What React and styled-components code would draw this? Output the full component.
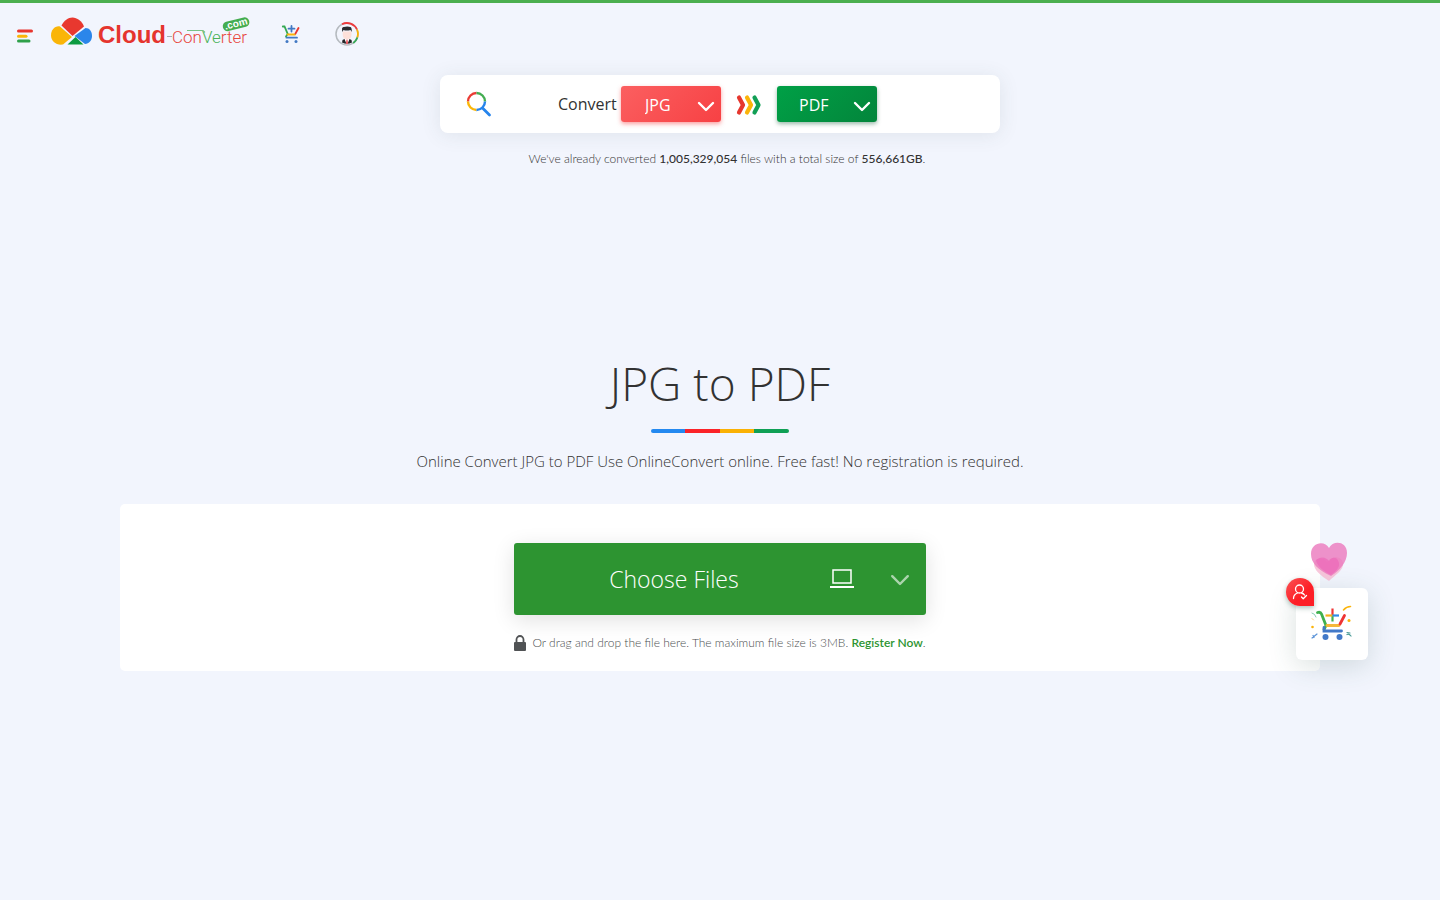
import styled, { createGlobalStyle } from "styled-components";

const GlobalStyle = createGlobalStyle`
  * {
    box-sizing: border-box;
  }

  body {
    margin: 0;
    min-height: 100vh;
    background: #f2f5fd;
    color: #323232;
    font-family: "Open Sans", "Noto Sans", sans-serif;
    font-weight: 300;
  }
`;

const Page = styled.div`
  border-top: 3px solid #4caf50;
`;

const Header = styled.header`
  display: flex;
  align-items: center;
  height: 62px;
  padding: 0 16px;
`;

const IconButton = styled.button`
  display: flex;
  padding: 4px 0 0;
  border: 0;
  background: none;
  cursor: pointer;
`;

const HeaderLink = styled.a`
  display: flex;
  margin-left: ${(props) => props.$gap};
`;

const SearchBar = styled.form`
  display: flex;
  align-items: center;
  width: 100%;
  max-width: 560px;
  height: 58px;
  margin: 10px auto 0;
  padding: 0 26px;
  border-radius: 8px;
  background: #fff;
  box-shadow: 0 2px 20px rgba(60, 80, 80, 0.1);
`;

const ConvertLabel = styled.label`
  width: 63px;
  margin-left: 66px;
  font-size: 16px;
  font-weight: 400;
`;

const SelectWrapper = styled.div`
  display: grid;
  align-items: center;
  width: 100px;
  height: 36px;
  border-radius: 3px;
  background: ${(props) => props.$background};
  box-shadow: 0 2px 4px ${(props) => props.$shadow};

  > * {
    grid-area: 1 / 1;
  }

  svg {
    justify-self: end;
    margin: 5px 6px 0 0;
    pointer-events: none;
  }
`;

const FormatSelect = styled.select`
  width: 100%;
  height: 36px;
  padding: 2px 0 0 ${(props) => props.$indent};
  border: 0;
  background: none;
  color: #fff;
  font-family: inherit;
  font-size: 16px;
  font-weight: 400;
  appearance: none;
`;

const ArrowsIcon = styled.svg`
  margin: 2px 16px 0 14px;
`;

const Stats = styled.p`
  margin: 16px 0 0;
  padding-left: 14px;
  font-family: Lato, sans-serif;
  font-size: 12px;
  line-height: 20px;
  text-align: center;

  b {
    font-weight: 500;
  }
`;

const Main = styled.main`
  max-width: 1200px;
  margin: 183px auto 0;
  text-align: center;
`;

const Title = styled.h1`
  margin: 0;
  font-size: 46px;
  font-weight: 300;
  line-height: 62px;
`;

const Divider = styled.div`
  width: 138px;
  height: 4px;
  margin: 15px auto 0;
  border-radius: 2px;
  background: linear-gradient(
    90deg,
    #2489f0 25%,
    #fb2329 25% 50%,
    #fab105 50% 75%,
    #0fa055 75%
  );
`;

const Description = styled.p`
  margin: 16px 0 0;
  font-size: 15px;
  line-height: 24px;
`;

const UploadCard = styled.section`
  display: flex;
  flex-direction: column;
  align-items: center;
  margin-top: 31px;
  padding: 39px 16px 18px;
  border-radius: 5px;
  background: #fff;
`;

const ChooseButton = styled.button`
  display: flex;
  align-items: center;
  width: 100%;
  max-width: 412px;
  height: 72px;
  padding: 0 16px 0 0;
  border: 0;
  border-radius: 3px;
  background: #2d9431;
  box-shadow: 0 5px 22px rgba(0, 0, 0, 0.12);
  color: #fff;
  font-family: inherit;
  font-size: 23px;
  font-weight: 300;
  cursor: pointer;
`;

const ChooseLabel = styled.span`
  flex: 1;
  padding-left: 4px;
`;

const ChevronSlot = styled.span`
  display: flex;
  margin: 4px 0 0 36px;
  opacity: 0.6;
`;

const DropHint = styled.p`
  display: flex;
  align-items: center;
  gap: 6px;
  margin: 18px 0 0;
  color: #4c4f51;
  font-family: Lato, sans-serif;
  font-size: 12px;
  line-height: 20px;

  a {
    color: #2d9431;
    font-weight: 600;
    text-decoration: none;
  }
`;

const FloatingCart = styled.aside`
  position: fixed;
  right: 72px;
  bottom: 240px;
  width: 72px;
  height: 72px;
  border-radius: 6px;
  background: #fff;
  box-shadow: 0 6px 28px rgba(50, 90, 80, 0.18);
`;

const CartLink = styled.a`
  display: flex;
  align-items: center;
  justify-content: center;
  height: 100%;
`;

const UserBadge = styled.button`
  position: absolute;
  top: -10px;
  left: -10px;
  display: flex;
  align-items: center;
  justify-content: center;
  width: 28px;
  height: 28px;
  padding: 0;
  border: 0;
  border-radius: 14px 14px 0 14px;
  background: linear-gradient(135deg, #f95356, #fd1f26 60%);
  box-shadow: 0 2px 5px rgba(20, 80, 60, 0.35);
`;

const Heart = styled.svg`
  position: absolute;
  top: -46px;
  left: 14px;
`;

const Chevron = ({ size = 18, strokeWidth = 2.4 }) => (
  <svg
    width={size}
    height={(size * 12) / 18}
    viewBox="0 0 18 12"
    fill="none"
    stroke="#fff"
    strokeWidth={strokeWidth}
    strokeLinecap="round"
    strokeLinejoin="round"
  >
    <path d="M2 2l7 7 7-7" />
  </svg>
);

const MenuIcon = () => (
  <svg width="18" height="16" viewBox="0 0 18 16" strokeWidth="3" strokeLinecap="round">
    <path d="M2.500 3h13" stroke="#e8352e" />
    <path d="M2.500 8.200h7.500" stroke="#fbb40a" />
    <path d="M2.500 13h10.500" stroke="#2fa04a" />
  </svg>
);

const Logo = () => (
  <svg width="200" height="40" viewBox="0 -2 200 40">
    <path d="M10.500 9.500C13 4.500 17 1.500 21.500 1.500S31 5 33 10.500L21.500 20z" fill="#e8382f" />
    <path d="M9 10.500L21 21 12 28.500C5 29.500 0 25 0 19.500S4 9.500 9 10.500z" fill="#fab508" />
    <path d="M34.500 12C38.500 12 41 15.500 41 20S38 27.500 34 28L23.500 20z" fill="#2b86ea" />
    <path d="M24.500 21L32.500 28.500H16.500z" fill="#0d9b41" />
    <text
      x="47"
      y="27"
      fill="#e5342e"
      fontFamily="Liberation Sans, sans-serif"
      fontSize="24"
      fontWeight="700"
    >
      Cloud
    </text>
    <path d="M116 20.500h5" stroke="#a5adb5" />
    <text x="121" y="27" fontFamily="Roboto, sans-serif" fontSize="17" fontWeight="300">
      <tspan fill="#e8483f">Con</tspan>
      <tspan fill="#4bb25a">Ve</tspan>
      <tspan fill="#e8483f">rter</tspan>
    </text>
    <path d="M136 14.500h16l2 2" fill="none" stroke="#79c285" strokeWidth="1.200" />
    <g transform="rotate(-14 185 8)">
      <rect x="171.500" y="3.500" width="27" height="9.500" rx="4.500" fill="#45ad50" />
      <text
        x="185"
        y="11"
        fill="#fff"
        fontFamily="Liberation Sans, sans-serif"
        fontSize="10"
        fontWeight="700"
        textAnchor="middle"
      >
        .com
      </text>
    </g>
  </svg>
);

const CartIcon = () => (
  <svg
    width="20"
    height="20"
    viewBox="0 0 20 20"
    fill="none"
    strokeWidth="1.800"
    strokeLinecap="round"
  >
    <path d="M1.800 2.500h1.700l3.200 7.500-1.700 2.500" stroke="#34a853" />
    <path d="M6.500 10.500H14" stroke="#fbb40a" />
    <path d="M14.500 9.500L17.500 4" stroke="#e8382f" />
    <path d="M5.500 13.700H16M10.500 2v5.500M7.500 4.700h6" stroke="#4279c4" />
    <circle cx="6" cy="17.500" r="1.500" fill="#4279c4" />
    <circle cx="15" cy="17.500" r="1.500" fill="#4279c4" />
  </svg>
);

const AvatarIcon = () => (
  <svg width="24" height="24" viewBox="0 0 24 24" fill="none">
    <circle cx="12" cy="12" r="11" stroke="#b5babf" strokeWidth="1.500" />
    <path d="M7 2.200A11 11 0 0 1 22 7.500" stroke="#ee3b3e" strokeWidth="1.800" />
    <path d="M22 7.500a11 11 0 0 1 .3 8" stroke="#fbb40a" strokeWidth="1.800" />
    <path d="M22.300 15.500a11 11 0 0 1-4 5.500" stroke="#34a853" strokeWidth="1.800" />
    <path d="M7 20.500l.5-2.500 3-1.500h3l3 1.500.5 2.500q-5 2.500-10 0z" fill="#242629" />
    <path d="M9.300 16.500L12 23l2.700-6.500z" fill="#fff" />
    <path d="M11.500 17.500h1l.5 4-1 1-1-1z" fill="#e84852" />
    <path d="M7.700 9.500h8.800v3q0 4.700-4.400 4.700t-4.400-4.700z" fill="#fde0d9" />
    <path d="M7.200 10L7 6.500Q7.500 4.500 9 5q3.500-1 7 .2 1.200 1.800.8 4.800l-1.300-2q-4 1-7 0z" fill="#292b2f" />
  </svg>
);

const SearchIcon = () => (
  <svg width="26" height="26" viewBox="0 0 26 26" fill="none" strokeWidth="2.400">
    <path d="M2 10.500a8.500 8.500 0 0 1 8.500-8.500" stroke="#ea3c35" />
    <path d="M10.500 2A8.500 8.500 0 0 1 19 10.500" stroke="#43ad52" />
    <path d="M2 10.500a8.500 8.500 0 0 0 8.500 8.500" stroke="#fbb608" />
    <path d="M19 10.500a8.500 8.500 0 0 1-8.500 8.500" stroke="#2684ec" />
    <path d="M16.500 17l7 7" stroke="#2684ec" strokeWidth="2.800" strokeLinecap="round" />
  </svg>
);

const LaptopIcon = () => (
  <svg width="24" height="20" viewBox="0 0 24 20" fill="none" stroke="#fff">
    <rect x="3" y="1" width="18" height="13" strokeWidth="1.500" />
    <path d="M0 18h24" strokeWidth="2" />
  </svg>
);

const LockIcon = () => (
  <svg width="12" height="16" viewBox="0 0 12 16">
    <path d="M2.500 8V4.500a3.500 3.500 0 0 1 7 0V8" fill="none" stroke="#505254" strokeWidth="1.800" />
    <rect y="7" width="12" height="9" rx="1" fill="#505254" />
  </svg>
);

const PartyCart = () => (
  <svg width="42" height="38" viewBox="0 0 42 38" fill="none" strokeLinecap="round">
    <g strokeWidth="2.800">
      <path d="M6.500 7.500q3-1 4 1.500l4.500 11.500-2 4" stroke="#3fb04e" />
      <path d="M16 20.500h12" stroke="#f5b83a" />
      <path d="M29 19L33.500 10.500" stroke="#ee3434" />
      <path d="M13 22.500v3.500h17.500" stroke="#4279c8" />
    </g>
    <g strokeWidth="2.200" strokeLinecap="butt">
      <path d="M21.500 3.500v7" stroke="#ee3434" />
      <path d="M21.500 10.500v6" stroke="#3fb04e" />
      <path d="M14.500 10.500h7" stroke="#f5b01c" />
      <path d="M21.500 10.500H28" stroke="#2e8ce8" />
    </g>
    <circle cx="14.500" cy="32" r="3" fill="#4279c8" />
    <circle cx="28.500" cy="32" r="3" fill="#4279c8" />
    <circle cx="38" cy="15.500" r="1.500" fill="#fbb40a" />
    <circle cx="1.500" cy="22" r="1.300" fill="#fbb40a" />
    <path d="M32.500 5q3-3.500 7-3.500" stroke="#fbb40a" strokeWidth="1.600" />
    <path d="M1 8q3 .5 4 4" stroke="#8bcdb4" />
    <path d="M1 13.500l1.500 1.500" stroke="#f6cf82" />
    <path d="M1 33l5-4M2 30.500l1 2" stroke="#5a93d8" strokeWidth="1.200" />
    <path d="M36 27.500l3 .5M36 29.500q2-1 4 1.500" stroke="#4b9c98" strokeWidth="1.200" />
  </svg>
);

const UserIcon = () => (
  <svg
    width="18"
    height="18"
    viewBox="0 0 18 18"
    fill="none"
    stroke="#fff"
    strokeWidth="1.300"
    strokeLinecap="round"
    strokeLinejoin="round"
  >
    <circle cx="8.500" cy="6" r="4" />
    <path d="M2.500 15.500q0-4 4-5.500M10.500 10q2 .5 3 2M10.500 14l1.700 1.700 3.300-3.200" />
  </svg>
);

const FormatPicker = ({ id, label, value, indent, background, shadow }) => (
  <SelectWrapper $background={background} $shadow={shadow}>
    <FormatSelect aria-label={label} id={id} defaultValue={value} $indent={indent}>
      <option>{value}</option>
    </FormatSelect>
    <Chevron />
  </SelectWrapper>
);

const App = () => (
  <>
    <GlobalStyle />
    <Page>
      <Header>
        <IconButton aria-label="Menu">
          <MenuIcon />
        </IconButton>
        <HeaderLink href="#" aria-label="Cloud-Converter.com" $gap="17px">
          <Logo />
        </HeaderLink>
        <HeaderLink href="#" aria-label="Cart" $gap="30px">
          <CartIcon />
        </HeaderLink>
        <HeaderLink href="#" aria-label="Account" $gap="34px">
          <AvatarIcon />
        </HeaderLink>
      </Header>

      <SearchBar>
        <SearchIcon />
        <ConvertLabel htmlFor="from">Convert</ConvertLabel>
        <FormatPicker
          id="from"
          label="Convert from"
          value="JPG"
          indent="24px"
          background="linear-gradient(135deg, #fb5f60, #f74144)"
          shadow="rgba(247, 65, 68, 0.5)"
        />
        <ArrowsIcon
          width="26"
          height="22"
          viewBox="0 0 26 22"
          fill="none"
          strokeWidth="4.200"
          strokeLinecap="round"
          strokeLinejoin="round"
        >
          <path d="M4 3.500L8 11 4 18.500" stroke="#e6372e" />
          <path d="M12 3.500L16 11l-4 7.500" stroke="#fbb40a" />
          <path d="M19.500 3.500l4 7.500-4 7.500" stroke="#129f56" />
        </ArrowsIcon>
        <FormatPicker
          id="to"
          label="Convert to"
          value="PDF"
          indent="22px"
          background="linear-gradient(135deg, #00a046, #03853b)"
          shadow="rgba(0, 80, 40, 0.4)"
        />
      </SearchBar>

      <Stats>
        We've already converted <b>1,005,329,054</b> files with a total size of{" "}
        <b>556,661GB</b>.
      </Stats>

      <Main>
        <Title>JPG to PDF</Title>
        <Divider />
        <Description>
          Online Convert JPG to PDF Use OnlineConvert online. Free fast! No
          registration is required.
        </Description>
        <UploadCard>
          <ChooseButton>
            <ChooseLabel>Choose Files</ChooseLabel>
            <LaptopIcon />
            <ChevronSlot>
              <Chevron size={20} strokeWidth={2.2} />
            </ChevronSlot>
          </ChooseButton>
          <DropHint>
            <LockIcon />
            <span>
              Or drag and drop the file here. The maximum file size is 3MB.{" "}
              <a href="#">Register Now</a>.
            </span>
          </DropHint>
        </UploadCard>
      </Main>
    </Page>

    <FloatingCart>
      <CartLink href="#" aria-label="Open cart">
        <PartyCart />
      </CartLink>
      <UserBadge aria-label="Sign in">
        <UserIcon />
      </UserBadge>
      <Heart width="38" height="40" viewBox="0 0 38 40">
        <path
          d="M19 39C10 33 4 28 4 22c0-6 9-8 13-2 5-7 15-6 16 1 1 7-8 12-14 18z"
          fill="#f5a9c6"
          opacity="0.65"
        />
        <path
          d="M21 34C8 28 1 21 1 12 1 0 15-2 19 6c4-8 18-7 18 5 0 9-7 17-16 23z"
          fill="#eb78bd"
          opacity="0.8"
        />
        <path
          d="M21 33C13 29 7 24 6 18c5-4 10-3 13 1 3-5 9-4 10 2 1 5-4 9-8 12z"
          fill="#ec69b9"
          opacity="0.7"
        />
      </Heart>
    </FloatingCart>
  </>
);

export default App;
